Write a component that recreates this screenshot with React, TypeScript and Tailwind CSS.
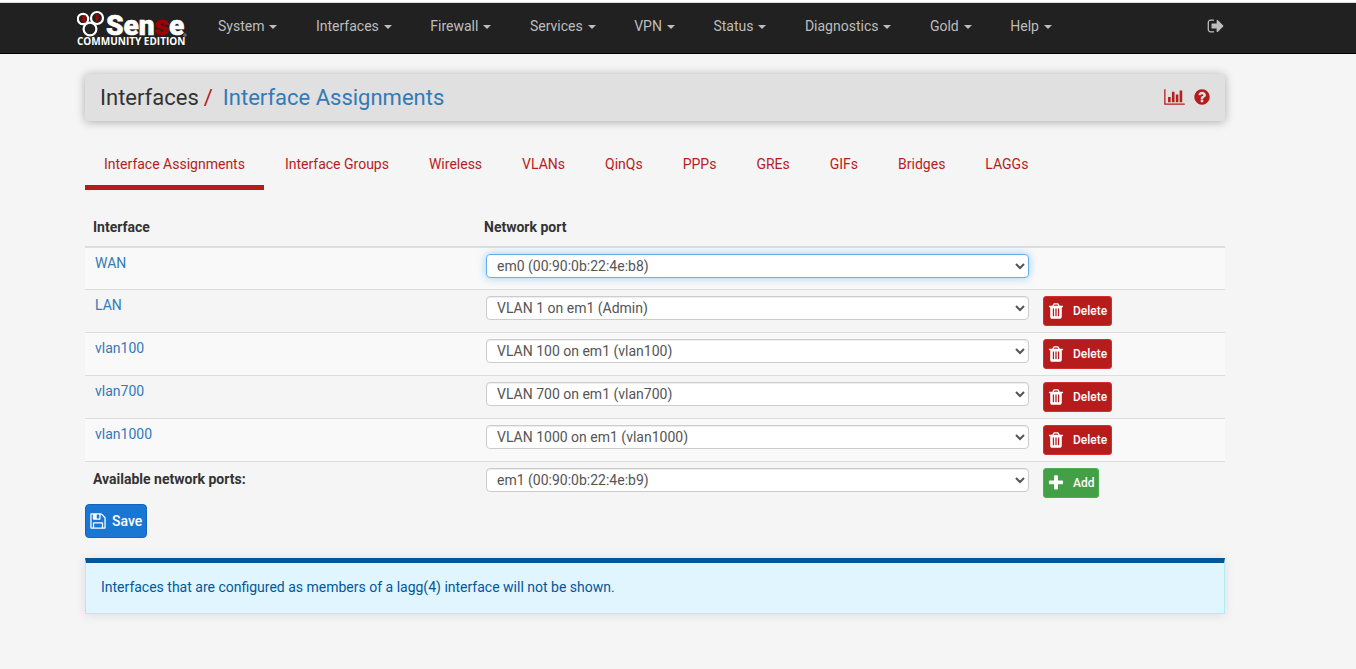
import { PropsWithChildren, useState } from "react";

interface IAssignment {
  name: string;
  port: string;
  removable: boolean;
}

interface IIcon {
  path: string;
  viewBox?: string;
  className?: string;
}

const MENUS = [
  "System",
  "Interfaces",
  "Firewall",
  "Services",
  "VPN",
  "Status",
  "Diagnostics",
  "Gold",
  "Help",
];

const TABS = [
  "Interface Assignments",
  "Interface Groups",
  "Wireless",
  "VLANs",
  "QinQs",
  "PPPs",
  "GREs",
  "GIFs",
  "Bridges",
  "LAGGs",
];

const ASSIGNMENTS: IAssignment[] = [
  { name: "WAN", port: "em0 (00:90:0b:22:4e:b8)", removable: false },
  { name: "LAN", port: "VLAN 1 on em1 (Admin)", removable: true },
  { name: "vlan100", port: "VLAN 100 on em1 (vlan100)", removable: true },
  { name: "vlan700", port: "VLAN 700 on em1 (vlan700)", removable: true },
  { name: "vlan1000", port: "VLAN 1000 on em1 (vlan1000)", removable: true },
];

const FREE_PORT = "em1 (00:90:0b:22:4e:b9)";

const PORTS = [...ASSIGNMENTS.map(({ port }) => port), FREE_PORT];

const ICONS = {
  signOut:
    "M704 1440q0 4 1 20t.5 26.5-3 23.5-10 19.5-20.5 6.5h-320q-119 0-203.5-84.5t-84.5-203.5v-704q0-119 84.5-203.5t203.5-84.5h320q13 0 22.5 9.5t9.5 22.5q0 4 1 20t.5 26.5-3 23.5-10 19.5-20.5 6.5h-320q-66 0-113 47t-47 113v704q0 66 47 113t113 47h312l11.5 1 11.5 3 8 5.5 7 9 2 13.5zm928-544q0 26-19 45l-544 544q-19 19-45 19t-45-19-19-45v-288h-448q-26 0-45-19t-19-45v-384q0-26 19-45t45-19h448v-288q0-26 19-45t45-19 45 19l544 544q19 19 19 45z",
  chart:
    "M640 896v512h-256v-512h256zm384-512v1024h-256v-1024h256zm1024 1152v128h-2048v-1536h128v1408h1920zm-640-896v768h-256v-768h256zm384-384v1152h-256v-1152h256z",
  help: "M1024 1376v-192q0-14-9-23t-23-9h-192q-14 0-23 9t-9 23v192q0 14 9 23t23 9h192q14 0 23-9t9-23zm256-672q0-88-55.5-163t-138.5-116-170-41q-243 0-371 213-15 24 8 42l132 100q7 6 19 6 16 0 25-12 53-68 86-92 34-24 86-24 48 0 85.5 26t37.5 59q0 38-20 61t-68 45q-63 28-115.5 86.5t-52.5 125.5v36q0 14 9 23t23 9h192q14 0 23-9t9-23q0-19 21.5-49.5t54.5-49.5q32-18 49-28.5t46-35 44.5-48 28-60.5 12.5-81zm384 192q0 209-103 385.5t-279.5 279.5-385.5 103-385.5-103-279.5-279.5-103-385.5 103-385.5 279.5-279.5 385.5-103 385.5 103 279.5 279.5 103 385.5z",
  trash:
    "M704 1376v-704q0-14-9-23t-23-9h-64q-14 0-23 9t-9 23v704q0 14 9 23t23 9h64q14 0 23-9t9-23zm256 0v-704q0-14-9-23t-23-9h-64q-14 0-23 9t-9 23v704q0 14 9 23t23 9h64q14 0 23-9t9-23zm256 0v-704q0-14-9-23t-23-9h-64q-14 0-23 9t-9 23v704q0 14 9 23t23 9h64q14 0 23-9t9-23zm-544-992h448l-48-117q-7-9-17-11h-317q-10 2-17 11zm928 32v64q0 14-9 23t-23 9h-96v948q0 83-47 143.5t-113 60.5h-832q-66 0-113-58.5t-47-141.5v-952h-96q-14 0-23-9t-9-23v-64q0-14 9-23t23-9h309l70-167q15-37 54-63t79-26h320q40 0 79 26t54 63l70 167h309q14 0 23 9t9 23z",
  plus: "M1600 736v192q0 40-28 68t-68 28h-416v416q0 40-28 68t-68 28h-192q-40 0-68-28t-28-68v-416h-416q-40 0-68-28t-28-68v-192q0-40 28-68t68-28h416v-416q0-40 28-68t68-28h192q40 0 68 28t28 68v416h416q40 0 68 28t28 68z",
  save: "M512 1536h768v-384h-768v384zm896 0h128v-896q0-14-10-38.5t-20-34.5l-281-281q-10-10-34-20t-39-10v416q0 40-28 68t-68 28h-576q-40 0-68-28t-28-68v-416h-128v1280h128v-416q0-40 28-68t68-28h832q40 0 68 28t28 68v416zm-384-928v-320q0-13-9.5-22.5t-22.5-9.5h-192q-13 0-22.5 9.5t-9.5 22.5v320q0 13 9.5 22.5t22.5 9.5h192q13 0 22.5-9.5t9.5-22.5zm640 32v928q0 40-28 68t-68 28h-1344q-40 0-68-28t-28-68v-1344q0-40 28-68t68-28h928q40 0 88 20t76 48l280 280q28 28 48 76t20 88z",
};

const Icon = ({ path, viewBox = "0 0 1792 1792", className = "size-[18px]" }: IIcon) => (
  <svg viewBox={viewBox} className={className} fill="currentColor" aria-hidden="true">
    <path d={path} />
  </svg>
);

const Container = ({ children }: PropsWithChildren) => (
  <div className="pr-[46px]">
    <div className="mx-auto max-w-[1140px]">{children}</div>
  </div>
);

const Logo = () => (
  <svg width="112" height="40" viewBox="0 0 112 40" aria-label="Sense Community Edition">
    <g fill="#212121" stroke="#fff" strokeWidth="2.2">
      <circle cx="6" cy="9" r="5.2" />
      <circle cx="20" cy="8" r="6" />
      <circle cx="13" cy="19" r="6.4" />
    </g>
    <path d="M5 6.500l4-1v7l-4-1z M18.500 4.500l3-.5v8l-3-1z" fill="#a00000" />
    <text
      x="29"
      y="25"
      fontFamily="Roboto, sans-serif"
      fontWeight="900"
      fontSize="28"
      fill="#fff"
      stroke="#fff"
      strokeWidth="0.6"
    >
      Sen
      <tspan fill="#a00000" stroke="#a00000">
        s
      </tspan>
      e
    </text>
    <circle cx="108" cy="25" r="1.2" fill="none" stroke="#999" strokeWidth="0.8" />
    <text x="0" y="35" fontFamily="Open Sans, sans-serif" fontWeight="700" fontSize="10" fill="#fff">
      COMMUNITY EDITION
    </text>
  </svg>
);

const Navbar = () => (
  <header className="border-b border-black bg-[#212121] text-[#bdbdbd]">
    <Container>
      <div className="flex h-[50px] items-center">
        <a href="#" className="-ml-2 mt-1 shrink-0">
          <Logo />
        </a>
        <nav className="mr-[136px] ml-2.5 flex flex-1 justify-between pb-1">
          {MENUS.map((menu) => (
            <button key={menu} className="flex items-center gap-[5px] px-[19px] leading-5">
              {menu}
              <span className="mt-0.5 border-x-4 border-t-4 border-x-transparent border-t-current"></span>
            </button>
          ))}
        </nav>
        <a href="#" aria-label="Logout" className="pb-1">
          <Icon path={ICONS.signOut} />
        </a>
      </div>
    </Container>
  </header>
);

interface IPortSelect {
  label: string;
  value: string;
  onChange: (value: string) => void;
  focused?: boolean;
}

const PortSelect = ({ label, value, onChange, focused }: IPortSelect) => (
  <select
    aria-label={label}
    value={value}
    onChange={(e) => onChange(e.target.value)}
    className={`block h-6 w-full rounded border bg-white px-1.5 text-[#555] outline-none ${
      focused
        ? "border-[#66afe9] shadow-[0_0_8px_rgba(102,175,233,0.6)]"
        : "border-[#ccc] shadow-[inset_0_1px_1px_rgba(0,0,0,0.075)]"
    }`}
  >
    {PORTS.map((port) => (
      <option key={port}>{port}</option>
    ))}
  </select>
);

const App = () => {
  const [rows, setRows] = useState(ASSIGNMENTS);
  const [freePort, setFreePort] = useState(FREE_PORT);
  const [tab, setTab] = useState(TABS[0]);

  const onPortChange = (index: number, port: string) => {
    setRows(rows.map((row, i) => (i === index ? { ...row, port } : row)));
  };

  return (
    <div className="min-h-screen bg-[#f5f5f5] pb-8 font-[Roboto,sans-serif] text-sm leading-5 text-[#333]">
      <div className="h-[3px] border-b border-[#ddd] bg-white"></div>
      <Navbar />
      <Container>
        <div className="mt-5 flex h-[47px] items-center justify-between rounded bg-[#e0e0e0] pr-3.5 pl-[15px] text-[#b71c1c] shadow-[0_1px_10px_rgba(0,0,0,0.3)]">
          <h1 className="flex text-[22px] leading-6">
            <span className="text-[#333]">Interfaces</span>
            <span className="mr-2.5 ml-[5px]">/</span>
            <a href="#" className="text-[#337ab7]">
              Interface Assignments
            </a>
          </h1>
          <div className="flex items-center gap-2 pb-0.5">
            <a href="#" aria-label="Related status">
              <Icon path={ICONS.chart} viewBox="0 0 2048 1792" className="h-[18px] w-[21px]" />
            </a>
            <a href="#" aria-label="Help">
              <Icon path={ICONS.help} />
            </a>
          </div>
        </div>

        <nav className="mt-[23px] flex gap-0.5 text-[#b71c1c]">
          {TABS.map((name) => (
            <button
              key={name}
              onClick={() => setTab(name)}
              className={`border-b-5 px-[19px] pt-2.5 pb-[11px] ${
                tab === name ? "border-[#b71c1c]" : "border-transparent"
              }`}
            >
              {name}
            </button>
          ))}
        </nav>

        <table className="mt-5 w-full table-fixed border-separate border-spacing-0 text-left">
          <colgroup>
            <col className="w-[391px]" />
            <col />
            <col className="w-[190px]" />
          </colgroup>
          <thead>
            <tr className="[&>th]:border-b-2 [&>th]:border-[#ddd] [&>th]:px-2 [&>th]:pt-[7px] [&>th]:pb-[9px]">
              <th>Interface</th>
              <th>Network port</th>
              <th></th>
            </tr>
          </thead>
          <tbody className="align-top">
            {rows.map(({ name, port, removable }, index) => (
              <tr
                key={name}
                className="odd:bg-[#f9f9f9] [&>td]:h-[43px] [&>td]:border-b [&>td]:border-[#ddd] first:[&>td]:h-[42px]"
              >
                <td className="px-2.5 pt-[5px]">
                  <a href="#" className="text-[#337ab7]">
                    {name}
                  </a>
                </td>
                <td className="pt-1.5 pr-1.5 pl-2.5">
                  <PortSelect
                    label={`${name} network port`}
                    value={port}
                    onChange={(value) => onPortChange(index, value)}
                    focused={index === 0}
                  />
                </td>
                <td className="px-2 pt-1.5">
                  {removable && (
                    <button
                      onClick={() => setRows(rows.filter((_, i) => i !== index))}
                      className="flex h-[30px] items-center gap-2 rounded-[3px] border border-[#d32f2f] bg-[#b71c1c] pr-1 pl-[3px] text-xs font-medium text-white"
                    >
                      <Icon path={ICONS.trash} />
                      Delete
                    </button>
                  )}
                </td>
              </tr>
            ))}
            <tr>
              <th className="px-2 pt-[7px]">Available network ports:</th>
              <td className="pt-1.5 pr-1.5 pl-2.5">
                <PortSelect
                  label="Available network ports"
                  value={freePort}
                  onChange={setFreePort}
                />
              </td>
              <td className="px-2 py-1.5">
                <button className="flex h-[30px] items-center gap-2 rounded-[3px] border border-[#4caf50] bg-[#43a047] pr-1 pl-[3px] text-xs font-medium text-white">
                  <Icon path={ICONS.plus} />
                  Add
                </button>
              </td>
            </tr>
          </tbody>
        </table>

        <button className="flex h-[34px] items-center gap-[5px] rounded border border-[#1565c0] bg-[#1976d2] pr-1 pl-[3px] font-medium text-white">
          <Icon path={ICONS.save} />
          Save
        </button>

        <div className="mt-5 border border-t-5 border-[#b2ebf2] border-t-[#01579b] bg-[#e1f5fe] px-[15px] pt-3.5 pb-4 text-[#01579b] shadow-[0_1px_10px_rgba(0,0,0,0.1)]">
          Interfaces that are configured as members of a lagg(4) interface will not be shown.
        </div>
      </Container>
    </div>
  );
};

export default App;
